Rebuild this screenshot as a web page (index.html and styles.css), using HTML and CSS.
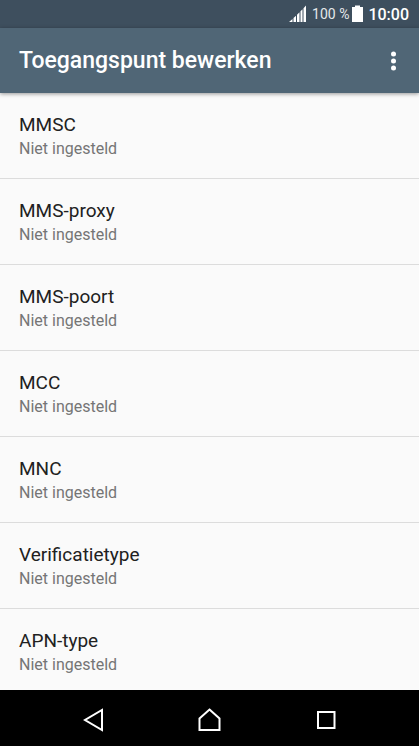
FILE: index.html
```html
<!DOCTYPE html>
<html lang="nl">
<head>
    <meta charset="UTF-8">
    <meta name="viewport" content="width=device-width, initial-scale=1.0">
    <title>Toegangspunt bewerken</title>
    <link rel="stylesheet" href="styles.css">
</head>
<body>
    <div class="status-bar">
        <svg class="signal" width="18" height="18" viewBox="0 0 18 18" aria-hidden="true">
            <path d="M0 17L3.5 14V17ZM4.5 13L7 10.7V17H4.5ZM8 9.7L10.5 7.3V17H8ZM11.5 6.3L13.5 4.2V17H11.5ZM14.5 3.2L17 0.5V17H14.5Z"/>
        </svg>
        <span class="percent">100 %</span>
        <svg class="battery" width="11" height="18" viewBox="0 0 11 18" aria-hidden="true">
            <path d="M3 0.5H8V2H11V17H0V2H3Z"/>
        </svg>
        <span class="clock">10:00</span>
    </div>

    <header class="app-bar">
        <h1 class="title">Toegangspunt bewerken</h1>
        <button class="menu-button" type="button" aria-label="Meer opties">
            <svg width="6" height="20" viewBox="0 0 6 20">
                <circle cx="3.5" cy="3" r="2.5"/>
                <circle cx="3.5" cy="10" r="2.5"/>
                <circle cx="3.5" cy="17" r="2.5"/>
            </svg>
        </button>
    </header>

    <main class="settings">
        <button class="row" type="button">
            <span class="name">MMSC</span>
            <span class="value">Niet ingesteld</span>
        </button>
        <button class="row" type="button">
            <span class="name">MMS-proxy</span>
            <span class="value">Niet ingesteld</span>
        </button>
        <button class="row" type="button">
            <span class="name">MMS-poort</span>
            <span class="value">Niet ingesteld</span>
        </button>
        <button class="row" type="button">
            <span class="name">MCC</span>
            <span class="value">Niet ingesteld</span>
        </button>
        <button class="row" type="button">
            <span class="name">MNC</span>
            <span class="value">Niet ingesteld</span>
        </button>
        <button class="row" type="button">
            <span class="name">Verificatietype</span>
            <span class="value">Niet ingesteld</span>
        </button>
        <button class="row" type="button">
            <span class="name">APN-type</span>
            <span class="value">Niet ingesteld</span>
        </button>
    </main>

    <nav class="nav-bar">
        <button class="nav-button" type="button" aria-label="Terug">
            <svg width="24" height="24" viewBox="0 0 24 24">
                <path d="M21 2V22L4 12Z"/>
            </svg>
        </button>
        <button class="nav-button" type="button" aria-label="Startscherm">
            <svg width="24" height="24" viewBox="0 0 24 24">
                <path d="M12.5 1.5L22.5 10.5V22H2.5V10.5Z"/>
            </svg>
        </button>
        <button class="nav-button" type="button" aria-label="Recente apps">
            <svg width="24" height="24" viewBox="0 0 24 24">
                <path d="M4 4H20.5V20H4Z"/>
            </svg>
        </button>
    </nav>
</body>
</html>
```
FILE: styles.css
```css
:root {
    --color-status: #3e4f5e;
    --color-bar: #506676;
    --color-bg: #fafafa;
    --color-text: #212121;
    --color-muted: #757575;
    --color-divider: #dcdcdc;
}

* {
    box-sizing: border-box;
}

body {
    margin: 0;
    height: 100vh;
    display: flex;
    flex-direction: column;
    background: var(--color-bg);
    color: var(--color-text);
    font-family: Roboto, sans-serif;
}

button {
    margin: 0;
    padding: 0;
    border: 0;
    background: none;
    color: inherit;
    font: inherit;
    cursor: pointer;
}

svg {
    display: block;
}

/* Status bar */
.status-bar {
    flex: none;
    display: flex;
    align-items: center;
    justify-content: flex-end;
    height: 28px;
    padding: 0 10px;
    background: var(--color-status);
    color: #fff;
    fill: #fff;
}

.percent {
    margin: 0 3px 0 5px;
    font-size: 14px;
    color: #e4e8ea;
}

.clock {
    margin-left: 5px;
    font-size: 16px;
    font-weight: 500;
}

/* App bar */
.app-bar {
    flex: none;
    position: relative;
    display: flex;
    align-items: center;
    justify-content: space-between;
    height: 65px;
    padding: 0 10px 0 19px;
    background: var(--color-bar);
    box-shadow: 0 1px 4px rgba(0, 0, 0, 0.4);
    color: #fff;
}

.title {
    margin: 0;
    font-size: 23px;
    font-weight: 500;
}

.menu-button {
    display: flex;
    justify-content: center;
    width: 32px;
    fill: #fff;
}

/* List */
.settings {
    flex: 1;
    min-height: 0;
    overflow: hidden;
}

.row {
    display: flex;
    flex-direction: column;
    width: 100%;
    padding: 20px 19px 17px;
    border-bottom: 1px solid var(--color-divider);
    text-align: left;
}

.row:last-child {
    border-bottom: 0;
}

.name {
    font-size: 19px;
    line-height: 24px;
}

.value {
    color: var(--color-muted);
    font-size: 16px;
    line-height: 24px;
}

/* Navigation bar */
.nav-bar {
    flex: none;
    display: flex;
    align-items: center;
    height: 56px;
    padding: 4px 35px 0;
    background: #000;
}

.nav-button {
    flex: 1;
    display: flex;
    justify-content: center;
    fill: none;
    stroke: #fff;
    stroke-width: 2;
}
```
